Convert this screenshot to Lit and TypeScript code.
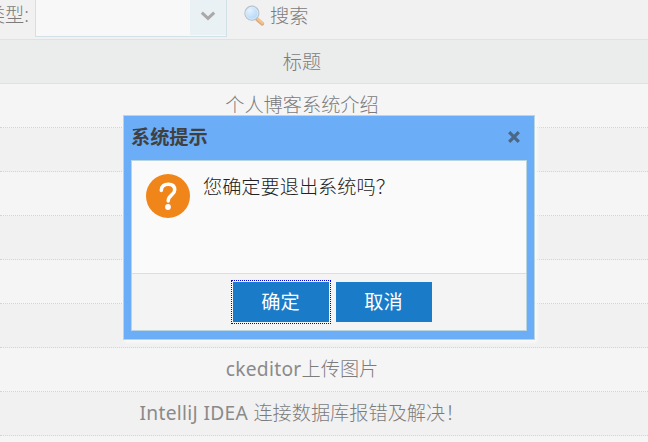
import { LitElement, html, css, svg } from "lit";
import { customElement } from "lit/decorators.js";

const rows = [
  ["", "个人博客系统介绍"],
  ["", ""],
  ["", ""],
  ["", ""],
  ["", ""],
  ["", ""],
  ["ckeditor", "上传图片"],
  ["IntelliJ IDEA ", "连接数据库报错及解决！"],
  ["", ""],
];

@customElement("app-root")
export class AppRoot extends LitElement {
  static styles = css`
    :host {
      display: block;
      position: relative;
      width: 648px;
      height: 442px;
      overflow: hidden;
      background: #f1f1f1;
      color: #7c7c7c;
      font: 300 19.2px/28px "Noto Sans", "Noto Sans CJK SC", sans-serif;
      white-space: nowrap;
    }
    * { box-sizing: border-box; }
    .toolbar { display: flex; height: 39px; align-items: flex-start; }
    .label { width: 35px; display: flex; justify-content: flex-end; padding: 1px 6px 0 0; flex: none; }
    .combo {
      width: 192px; height: 37px; display: flex; justify-content: flex-end; flex: none;
      border: 1px solid #d2e1e7; border-top: 0; background: #f8f8f8; padding-bottom: 1px;
    }
    .arrow { width: 36px; background: #e9f1f4; }
    .arrow svg, .close svg, .glass, .question { display: block; }
    .glass { margin: 5px 5px 0 16px; flex: none; }
    .search { padding-top: 2px; }
    .head, .row { width: 648px; height: 44px; text-align: center; padding-right: 44px; }
    .head { height: 45px; background: #ebeded; border: solid #e0e2e2; border-width: 1px 0; padding-top: 8px; }
    .row { border-bottom: 1px dotted #d4d4d4; padding-top: 7px; background: #f5f5f5; }
    .row:nth-child(even) { background: #f1f1f1; }
    .latin { font-weight: 400; letter-spacing: 0.3px; white-space: pre; color: #8a8a8a; }
    .dialog {
      position: absolute; left: 123px; top: 115px; width: 412px; height: 225px;
      display: flex; flex-direction: column; padding: 0 7px 8px;
      background: #6badf6; border: 1px solid #b9d5df; color: #404040;
      box-shadow: 2px 2px 3px #fbfbfb;
    }
    .title { display: flex; justify-content: space-between; height: 44px; font-weight: 700; padding: 7px 6px 0 0; flex: none; }
    .close { padding-top: 7px; }
    .panel { flex: 1; display: flex; flex-direction: column; border: 1px solid #b9d5df; background: #f4f4f4; }
    .message { display: flex; height: 112px; background: #fafafa; padding: 13px 14px; gap: 13px; color: #222; }
    .question { flex: none; }
    .question-text { line-height: 26px; }
    .actions { flex: 1; border-top: 1px solid #dddddd; display: flex; justify-content: center; gap: 7px; padding: 8px 0 0 6px; }
    .button {
      width: 96px; height: 40px; border: 0; padding: 0; background: #1a7bc9; color: #fff;
      font: inherit; font-weight: 400; line-height: 40px; text-align: center;
    }
    .focused { outline: 1px dotted #0000e0; outline-offset: 1px; }
  `;

  private glass() {
    return svg`<svg class="glass" width="22" height="22" viewBox="0 0 22 22">
      <defs><radialGradient id="lens" cx=".35" cy=".3" r=".8"><stop offset="0" stop-color="#e5f2ff"/><stop offset="1" stop-color="#aad3f8"/></radialGradient></defs>
      <path d="M14 14.2L19.3 18.7" stroke="#d9ad84" stroke-width="3.8" stroke-linecap="round"/>
      <path d="M14.7 14L19.6 18" stroke="#fac48b" stroke-width="2" stroke-linecap="round"/>
      <circle cx="8.9" cy="8.2" r="7" fill="url(#lens)" stroke="#b7c1cb" stroke-width="1.2"/>
      <circle cx="8.9" cy="8.2" r="6" fill="none" stroke="#dceaf7" stroke-width=".9"/>
    </svg>`;
  }

  render() {
    return html`
      <div class="toolbar">
        <div class="label">类型:</div>
        <div class="combo"><div class="arrow"><svg width="36" height="34"><path d="M11.8 12.6L18 18.4L24.2 12.6" fill="none" stroke="#a9a9a9" stroke-width="3"/></svg></div></div>
        ${this.glass()}
        <div class="search">搜索</div>
      </div>
      <div class="head">标题</div>
      <div class="rows">${rows.map(([latin, text]) => html`<div class="row">${latin ? html`<span class="latin">${latin}</span>` : ""}${text}</div>`)}</div>
      <div class="dialog">
        <div class="title">
          <span>系统提示</span>
          <span class="close"><svg width="14" height="14"><path d="M2.2 2.2L11.8 11.8M11.8 2.2L2.2 11.8" stroke="#4a6786" stroke-width="3.2"/></svg></span>
        </div>
        <div class="panel">
          <div class="message">
            <svg class="question" width="44" height="44" viewBox="0 0 44 44">
              <circle cx="22" cy="22" r="22" fill="#f08519"/>
              <path d="M15.3 16.6C15.3 12 18.3 10.3 22.3 10.3C26.5 10.3 28.7 12.6 28.7 15.9C28.7 21 22.2 20.8 22.2 27" fill="none" stroke="#fff" stroke-width="3.5" stroke-linecap="round"/>
              <circle cx="22" cy="33" r="2.9" fill="#fff"/>
            </svg>
            <span class="question-text">您确定要退出系统吗？</span>
          </div>
          <div class="actions">
            <button class="button focused">确定</button>
            <button class="button">取消</button>
          </div>
        </div>
      </div>
    `;
  }
}
